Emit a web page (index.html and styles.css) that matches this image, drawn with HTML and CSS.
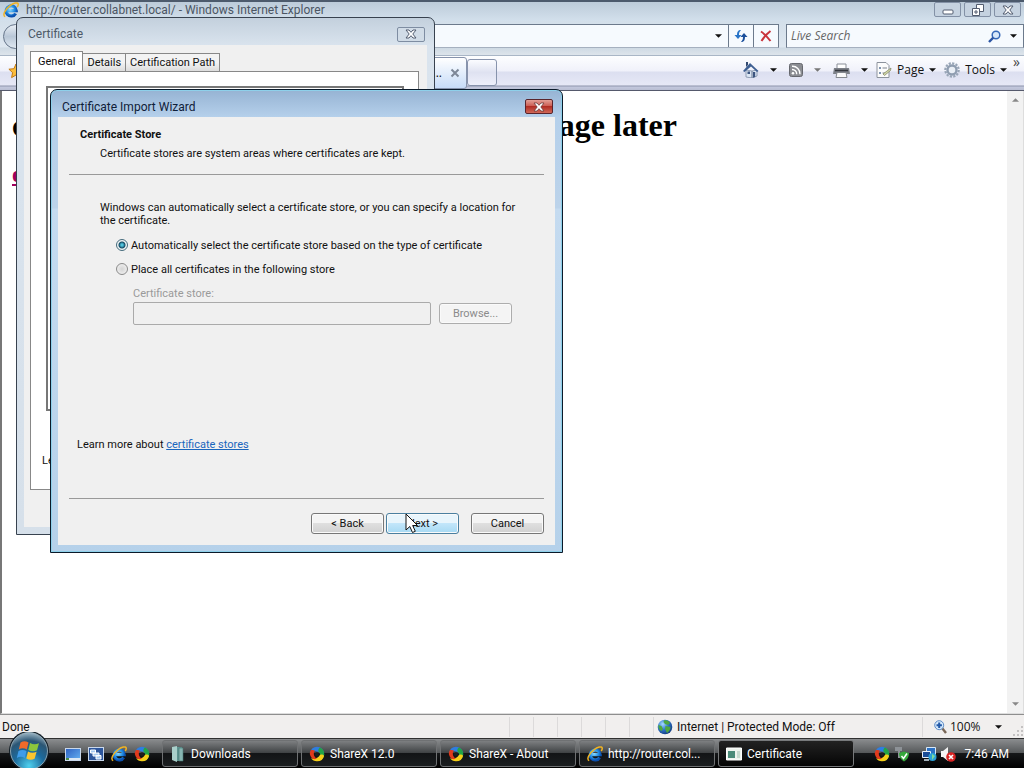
FILE: index.html
```html
<!DOCTYPE html>
<html lang="en">
<head>
<meta charset="utf-8">
<title>Certificate Import Wizard</title>
<link rel="stylesheet" href="styles.css">
</head>
<body>
<svg class="defs" aria-hidden="true">
  <defs>
    <radialGradient id="ieBlue" cx="40%" cy="35%" r="70%"><stop offset="0" stop-color="#8fdcff"/><stop offset=".6" stop-color="#2490e6"/><stop offset="1" stop-color="#0a4fae"/></radialGradient>
    <radialGradient id="orb" cx="50%" cy="90%" r="90%"><stop offset="0" stop-color="#4fd0ee"/><stop offset=".45" stop-color="#1c6a9c"/><stop offset=".75" stop-color="#2c5674"/><stop offset="1" stop-color="#9fb8c6"/></radialGradient>
    <linearGradient id="screen" x1="0" y1="0" x2="1" y2="1"><stop offset="0" stop-color="#2c5fc0"/><stop offset="1" stop-color="#67b4f4"/></linearGradient>
    <radialGradient id="globe" cx="35%" cy="30%" r="75%"><stop offset="0" stop-color="#a8dcff"/><stop offset=".5" stop-color="#3178cc"/><stop offset="1" stop-color="#123a80"/></radialGradient>
  </defs>
  <symbol id="ie" viewBox="0 0 16 16">
    <path d="M3.6 8.6h9.6A5 5 0 1 0 12.6 11.4" fill="none" stroke="url(#ieBlue)" stroke-width="3.200"/>
    <path d="M2.2 14.6C-.8 13.6 1.8 7.4 6.8 3.8 10.4 1.2 14.8-.2 15.2 2c.2 1-.4 2.2-1 3" fill="none" stroke="#f0b323" stroke-width="1.5"/>
  </symbol>
  <symbol id="sharex" viewBox="0 0 16 16">
    <path d="M8 .8A7.2 7.2 0 0 1 15.2 8c0 1.700-.8 3.400-2 4.600C13.400 9 11.600 6 7.600 5.400 5.400 5 3 5 1.200 6.400A7.200 7.200 0 0 1 8 .8z" fill="#2f7de0"/>
    <path d="M15.200 8A7.200 7.200 0 0 1 10.400 14.800C12 12.500 12 8 9.500 5.600 9 3.400 9.800 1.800 11 1.400A7.200 7.200 0 0 1 15.200 8z" fill="#22a347"/>
    <path d="M8 15.200A7.200 7.200 0 0 1 2 12.200C5 13 9.800 12 10.900 8.900c1.800-.8 3.300 0 4.200.8A7.200 7.200 0 0 1 8 15.200z" fill="#f6cf18"/>
    <path d="M.8 8c0-1.400.3-2.700 1-3.700 1.100-.5 2.900-.5 4.200.3C3.800 7.200 4.800 11 8 12.800 5 14.200 1.800 12.600.8 8z" fill="#e03a1c"/>
    <circle cx="8" cy="8.300" r="2" fill="#1d1d1d"/>
  </symbol>
  <symbol id="xmark" viewBox="0 0 12 10">
    <path d="M1 1h3l2 2.300L8 1h3L7.800 5 11 9H8L6 6.700 4 9H1l3.200-4z"/>
  </symbol>
  <symbol id="down" viewBox="0 0 8 4"><path d="M0 0h8L4 4z" fill="currentColor"/></symbol>
</svg>

<main class="browser">
  <header class="titlebar">
    <svg class="i16"><use href="#ie"/></svg>
    <h2 class="window-title">http://router.collabnet.local/ - Windows Internet Explorer</h2>
    <div class="window-buttons">
      <button class="wbtn" aria-label="Minimize"><svg width="12" height="10" viewBox="0 0 12 10"><rect x="1" y="5" width="10" height="4" rx="1" fill="#fff" stroke="#525d70"/></svg></button>
      <button class="wbtn" aria-label="Restore"><svg width="12" height="12" viewBox="0 0 12 12" fill="#fff" stroke="#525d70"><path d="M4.500.5h7v7h-7z"/><path d="M.5 4.500h7v7h-7z"/><path d="M3 7h2v2H3z"/></svg></button>
      <button class="wbtn" aria-label="Close"><svg class="x-pale" width="12" height="10"><use href="#xmark"/></svg></button>
    </div>
  </header>

  <div class="address-row">
    <span class="nav-back"></span>
    <div class="address">
      <input class="address-input" type="text" aria-label="Address">
      <button class="flat" aria-label="Show addresses"><svg class="caret"><use href="#down"/></svg></button>
      <button class="cell" aria-label="Refresh"><svg width="14" height="14" viewBox="0 0 14 14"><path d="M7 1C4 1 3 3 3 6H.5L4 10 7.500 6H5C5 4 5.500 2.500 7 1z" fill="#2a75c8"/><path d="M7 13c3 0 4-2 4-5h2.500L10 4 6.500 8H9c0 2-.5 3.500-2 5z" fill="#1b4f9b"/></svg></button>
      <button class="cell" aria-label="Stop"><svg width="12" height="12" viewBox="0 0 12 12"><path d="M1 1.500Q6 5 10.500 11M10.500 1Q5 5 1.500 11" stroke="#c9343c" stroke-width="2" fill="none"/></svg></button>
    </div>
    <div class="search">
      <input class="search-input" type="text" placeholder="Live Search" aria-label="Live Search">
      <button class="flat" aria-label="Search"><svg width="13" height="13" viewBox="0 0 13 13"><circle cx="8" cy="5" r="3.800" fill="#d8e8fa" stroke="#3668b8" stroke-width="1.500"/><path d="M5.300 7.700 1 12" stroke="#2c55a4" stroke-width="2.400"/></svg></button>
      <button class="flat" aria-label="Search options"><svg class="caret"><use href="#down"/></svg></button>
    </div>
  </div>

  <div class="tab-row">
    <svg class="star" width="16" height="16" viewBox="0 0 16 16"><path d="M8 1l2.100 4.700 5 .5-3.700 3.400 1 5L8 12l-4.400 2.600 1-5L.9 6.200l5-.5z" fill="#fbbd3c" stroke="#c47a10"/></svg>
    <div class="page-tab"><span>...</span><svg width="10" height="10" viewBox="0 0 10 10"><path d="M1.500 1.500l7 7m0-7l-7 7" stroke="#7d8797" stroke-width="2"/></svg></div>
    <button class="new-tab" aria-label="New tab"></button>
    <nav class="commands">
      <button class="cmd wide" aria-label="Home"><svg width="16" height="16" viewBox="0 0 16 16"><path d="M3 8v7l6 1V9zM9 9v7l5-2V8z" fill="#dce6f4" stroke="#7b8aa3" stroke-width=".8"/><path d="M0 9l7-8 8.500 8-1.500 1-6-5.500L1.500 10z" fill="#3e5f92"/><path d="M3 0h2v3l-2 2z" fill="#334a70"/><path d="M10 10h2.200v5L10 15.800zM4.500 9.500h2.500v2.500H4.500z" fill="#3d5580"/></svg><svg class="caret"><use href="#down"/></svg></button>
      <button class="cmd wide dim" aria-label="Feeds"><svg width="14" height="14" viewBox="0 0 14 14"><rect x=".5" y=".5" width="13" height="13" rx="2" fill="#8b8d92" stroke="#66686e"/><circle cx="4" cy="10.200" r="1.300" fill="#fff"/><path d="M3 6.500a4.500 4.500 0 0 1 4.700 4.700M3 3.300a7.500 7.500 0 0 1 8 8" fill="none" stroke="#fff" stroke-width="1.400"/></svg><svg class="caret"><use href="#down"/></svg></button>
      <button class="cmd wide" aria-label="Print"><svg width="17" height="15" viewBox="0 0 17 15"><path d="M4 1h9v5H4z" fill="#fff" stroke="#8a8f98"/><path d="M1 5h15l1 6H0z" fill="#7c8088"/><path d="M2 7.500h13" stroke="#34373d" stroke-width="1.500"/><path d="M4 9.500h9l1 5H3z" fill="#fafafa" stroke="#85898f"/></svg><svg class="caret"><use href="#down"/></svg></button>
      <button class="cmd"><svg width="16" height="16" viewBox="0 0 16 16"><path d="M1 .5h9L13 3.500v12H1z" fill="#fcfcfc" stroke="#8c929c"/><path d="M3 5h2v2H3zm0 5h2v2H3zm3 0h4" fill="#7f93b0"/><path d="M6.500 6H11M6.500 11H10" stroke="#7e848e"/><path d="M7 12l8-6-.5 2.500-6 5z" fill="#d2d8a6" stroke="#7d8060" stroke-width=".7"/></svg><span>Page</span><svg class="caret"><use href="#down"/></svg></button>
      <button class="cmd"><svg width="16" height="16" viewBox="0 0 16 16"><circle cx="8" cy="8" r="6.700" fill="none" stroke="#98a5b6" stroke-width="2.200" stroke-dasharray="2.200 1.300"/><circle cx="8" cy="8" r="4.500" fill="#e9eef5" stroke="#8f9db0" stroke-width="2.400"/></svg><span>Tools</span><svg class="caret"><use href="#down"/></svg></button>
      <button class="more" aria-label="More">»</button>
    </nav>
  </div>

  <div class="viewport">
    <article class="page">
      <h1 class="headline"><span>c</span><span class="headline-end">age later</span></h1>
      <a class="page-link" href="#">e</a>
    </article>
    <div class="scrollbar"><svg class="arrow up"><use href="#down"/></svg><svg class="arrow"><use href="#down"/></svg></div>
  </div>

  <footer class="status">
    <span class="status-text">Done</span>
    <span class="slot"></span><span class="slot"></span><span class="slot"></span><span class="slot"></span><span class="slot"></span><span class="slot"></span>
    <span class="zone"><svg width="16" height="16" viewBox="0 0 16 16"><circle cx="8" cy="8" r="7.300" fill="url(#globe)"/><path d="M7 1.500c2-1 5 .5 6 2.500L11 6 8 5 6.500 3zM8.500 7l5 1c0 3-2 5-3.500 6L8 10zM1.500 6l3 1 1.500 3-1.500 2C2 11 1 8.500 1.500 6z" fill="#4fa63d"/></svg>Internet | Protected Mode: Off</span>
    <button class="zoom"><svg width="13" height="14" viewBox="0 0 13 14"><path d="M8 8l4 5" stroke="#7a6858" stroke-width="2.400"/><circle cx="5.200" cy="5.200" r="4.500" fill="#d5e9fb" stroke="#5e8cc6"/><path d="M5.200 2.500v5.400M2.500 5.200h5.400" stroke="#2359a8" stroke-width="2"/></svg>100%<svg class="caret"><use href="#down"/></svg></button>
    <svg class="grip" width="10" height="10" viewBox="0 0 10 10"><path d="M8 0h2v2H8zM8 4h2v2H8zM8 8h2v2H8zM4 4h2v2H4zM4 8h2v2H4zM0 8h2v2H0z" fill="#c4c2c2"/></svg>
  </footer>
</main>

<footer class="taskbar">
  <button class="start" aria-label="Start"><svg width="42" height="36" viewBox="0 0 42 36"><circle cx="21" cy="19" r="20" fill="#111d26"/><circle cx="21" cy="19" r="18.500" fill="url(#orb)" stroke="#a5bcc8" stroke-width=".8"/><path d="M12.500 10.500q4-2.500 8 0l-1.700 7q-4-2.300-8 0z" fill="#f06a2a"/><path d="M22 11q4 2.300 9 .3l-2 7q-4 2-8.700-.3z" fill="#8cc63c"/><path d="M10.500 19q4-2.200 8 0l-1.700 7q-4-2.500-8 0z" fill="#3f9ce8"/><path d="M20 19.500q4 2.300 8.600.3l-2 7q-4 2-8.300-.3z" fill="#fbc52e"/></svg></button>
  <div class="quick">
    <svg class="i16" viewBox="0 0 16 16"><rect x=".5" y="2.500" width="15" height="12" fill="url(#screen)" stroke="#c9d8ec"/><path d="M1 13h14" stroke="#dbe8f4" stroke-width="2"/><path d="M1 12h3v2H1z" fill="#4a8b46"/></svg>
    <svg class="i16" viewBox="0 0 16 16"><rect x=".5" y="1.500" width="15" height="13" fill="#2d569c" stroke="#c9d8ec"/><path d="M2.500 4h5v3h-5zM5 7h6v3H5zM8 9.500h5V13H8z" fill="#a9ccf2" stroke="#fff"/></svg>
    <svg class="i16"><use href="#ie"/></svg>
    <svg class="i16"><use href="#sharex"/></svg>
  </div>
  <div class="tasks">
    <button class="task"><svg class="i16" viewBox="0 0 16 16"><path d="M2 1l5-1v16l-5-2z" fill="#a9cfca"/><path d="M7 1h5v14H7z" fill="#5c938f"/><path d="M9 2h4v13H9z" fill="#86b5b1" stroke="#467773" stroke-width=".6"/></svg>Downloads</button>
    <button class="task"><svg class="i16"><use href="#sharex"/></svg>ShareX 12.0</button>
    <button class="task"><svg class="i16"><use href="#sharex"/></svg>ShareX - About</button>
    <button class="task"><svg class="i16"><use href="#ie"/></svg>http://router.col...</button>
    <button class="task active"><svg class="i16" viewBox="0 0 16 16"><path d="M.5 2h15v12H.5z" fill="#eef4ee" stroke="#fff"/><path d="M2 5h7v7H2z" fill="#4a8b78"/><path d="M11 5h3v7h-3z" fill="#c6dace"/></svg>Certificate</button>
  </div>
  <div class="tray">
    <svg class="i16"><use href="#sharex"/></svg>
    <svg class="i16" viewBox="0 0 16 16"><path d="M2 1h7v4H2zM5 5h2v7H5z" fill="#8d9297"/><path d="M6 7l5-1.500L16 7c0 4-2 7-5 8.500C8 14 6 11 6 7z" fill="#35a83b"/><path d="M8.500 10l2 2.500L14 7.500" fill="none" stroke="#fff" stroke-width="1.500"/></svg>
    <svg class="i16 net" viewBox="0 0 16 16"><path d="M5.500 1.500h9v7h-9z" fill="#2b70c4" stroke="#d9e8f6"/><path d="M1.500 5.500h8v6h-8z" fill="#1a4d98" stroke="#e8f2fb"/><path d="M3 14h5" stroke="#d9e8f6" stroke-width="1.500"/><circle cx="11.500" cy="11" r="4" fill="#2ba0d8"/><path d="M11 8l3 2-3 4z" fill="#7fdc9a"/></svg>
    <svg class="i16" viewBox="0 0 16 16"><path d="M1 5h2l5-4v14l-5-4H1z" fill="#f5f5f5"/><circle cx="11" cy="11" r="4.800" fill="#d92424"/><path d="M9 9l4 4m0-4l-4 4" stroke="#fff" stroke-width="1.600"/></svg>
    <time class="clock">7:46 AM</time>
  </div>
</footer>

<section class="dialog cert" aria-label="Certificate">
  <header class="dialog-bar"><h2 class="dialog-title">Certificate</h2><button class="close-pale" aria-label="Close"><svg class="x-pale" width="12" height="10"><use href="#xmark"/></svg></button></header>
  <div class="dialog-body cert-body">
    <div class="cert-tabs"><button class="cert-tab on">General</button><button class="cert-tab">Details</button><button class="cert-tab">Certification Path</button></div>
    <div class="cert-panel"><div class="cert-box"></div><p class="cert-note">Learn more</p></div>
  </div>
</section>

<section class="dialog wizard" aria-label="Certificate Import Wizard">
  <header class="dialog-bar"><h2 class="dialog-title">Certificate Import Wizard</h2><button class="close-red" aria-label="Close"><svg width="12" height="10" fill="#fff" stroke="#6b3a3a" stroke-width=".8"><use href="#xmark"/></svg></button></header>
  <form class="dialog-body wizard-body">
    <div class="wizard-head"><h3 class="step">Certificate Store</h3><p class="step-sub">Certificate stores are system areas where certificates are kept.</p></div>
    <div class="wizard-main">
      <p class="intro">Windows can automatically select a certificate store, or you can specify a location for the certificate.</p>
      <label class="choice"><input class="radio" type="radio" name="store" checked>Automatically select the certificate store based on the type of certificate</label>
      <label class="choice"><input class="radio" type="radio" name="store">Place all certificates in the following store</label>
      <div class="store">
        <label class="store-label" for="store-name">Certificate store:</label>
        <div class="store-row"><input class="store-input" id="store-name" type="text" disabled><button class="btn" type="button" disabled>Browse...</button></div>
      </div>
      <p class="learn">Learn more about <a class="learn-link" href="#">certificate stores</a></p>
    </div>
    <div class="wizard-foot"><button class="btn" type="button">&lt; Back</button><button class="btn hot" type="button">Next &gt;</button><button class="btn cancel" type="button">Cancel</button></div>
  </form>
</section>

<svg class="cursor" width="14" height="21" viewBox="0 0 14 21"><path d="M1 1v16l3.800-3.500L7.500 19.500l2.800-1.200-2.600-5.800H12.500z" fill="#fff" stroke="#111" stroke-width="1"/></svg>
</body>
</html>
```
FILE: styles.css
```css
* { box-sizing: border-box; }
:root {
  --ui: Roboto, "Open Sans", sans-serif;
  --humanist: "Open Sans", "Noto Sans", sans-serif;
}
body {
  margin: 0;
  height: 100vh;
  display: flex;
  flex-direction: column;
  overflow: hidden;
  background: #fff;
  font: 12px/16px var(--humanist);
  color: #111;
}
h1, h2, h3, p { margin: 0; font-weight: 400; }
button, input { font: inherit; color: inherit; margin: 0; padding: 0; border: 0; background: none; }
svg { flex: none; }
.defs { position: absolute; width: 0; height: 0; }
.i16 { width: 16px; height: 16px; }
.caret { width: 7px; height: 4px; }

/* Browser window */
.browser { flex: 1; min-height: 0; display: flex; flex-direction: column; }
.titlebar {
  height: 21px;
  display: flex;
  align-items: flex-start;
  gap: 7px;
  padding-left: 3px;
  border-top: 2px solid #4c5a6c;
  background: linear-gradient(#bccbd9, #d3e0ec);
}
.window-title { flex: 1; font: 12px/16px var(--ui); color: #4b5563; }
.window-buttons { display: flex; gap: 3px; padding-right: 3px; }
.wbtn {
  display: grid;
  place-items: center;
  width: 27px;
  height: 15px;
  border: 1px solid #8391a6;
  border-radius: 2px;
  background: #c5d2e0;
}
.x-pale { fill: #fff; stroke: #525d70; }
.address-row {
  height: 34px;
  display: flex;
  align-items: flex-start;
  gap: 7px;
  padding: 3px 0 0 3px;
  background: linear-gradient(#d3dfea, #dee7f0 75%, #cfdae4 80%, #dde4eb);
}
.nav-back { width: 25px; height: 25px; border: 1px solid #66758a; border-radius: 50%; background: linear-gradient(#e8eef5, #b9c7d7 50%, #dfe8f1); }
.address { flex: 1; display: flex; height: 24px; border: 1px solid #6c7a8c; border-bottom-color: #a5b0bf; background: #f6fafe; }
.address-input { flex: 1; min-width: 0; }
.flat { display: grid; place-items: center; width: 19px; }
.cell { display: grid; place-items: center; width: 25px; border-left: 1px solid #6c7a8c; }
.search { width: 238px; display: flex; height: 24px; border: 1px solid #6c7a8c; border-bottom-color: #a5b0bf; background: #f6fafe; }
.search-input { flex: 1; min-width: 0; padding-left: 4px; font-style: italic; }
.search-input::placeholder { color: #666; opacity: 1; }
.tab-row {
  height: 36px;
  display: flex;
  align-items: flex-start;
  border-top: 1px solid #a9b6c6;
  border-bottom: 1px solid #55596c;
  background: linear-gradient(#fdfeff, #f0f1fa 15px, #dcdff0 16px, #e6e8f6 29px, #8d94ab 30px, #c3c8dd 31px, #b9bed2);
}
.star { margin: 7px 0 0 8px; }
.page-tab {
  display: flex;
  align-items: center;
  justify-content: flex-end;
  gap: 8px;
  width: 443px;
  height: 32px;
  margin-top: 1px;
  padding-right: 6px;
  border: 1px solid #8793ac;
  border-radius: 3px;
  background: linear-gradient(#fff, #c7dcf8);
}
.new-tab { width: 30px; height: 27px; margin-top: 3px; border: 1px solid #8793ac; border-radius: 3px; background: linear-gradient(#fbfcff, #dfe2f1 50%, #eef0fb); }
.commands { flex: 1; display: flex; justify-content: flex-end; gap: 8px; padding-right: 4px; }
.cmd { display: flex; align-items: center; gap: 5px; height: 28px; }
.wide { gap: 11px; margin-right: 4px; }
.wide + .cmd:not(.wide) { margin-left: -4px; }
.dim .caret { color: #777; }
.more { align-self: flex-start; margin-left: -2px; font-size: 14px; line-height: 12px; color: #444; }
.viewport { flex: 1; min-height: 0; display: flex; border-left: 2px solid #777; border-bottom: 1px solid #ddd; }
.page { flex: 1; padding: 15px 10px; font-family: "Liberation Serif", serif; color: #000; }
.headline { display: flex; justify-content: space-between; max-width: 665px; font-size: 32px; line-height: 38px; font-weight: 700; }
.page-link { display: inline-block; margin-top: 16px; font-size: 24px; line-height: 28px; font-weight: 700; color: #a0005c; }
.scrollbar { width: 17px; display: flex; flex-direction: column; justify-content: space-between; align-items: center; padding: 7px 0; background: #f2f2f2; border-right: 1px solid #ddd; }
.arrow { width: 7px; height: 4px; color: #888; }
.up { transform: rotate(180deg); }
.status { height: 24px; display: flex; align-items: center; padding-top: 1px; border-top: 1px solid #8e8e8e; background: #f1efee; }
.status-text { flex: 1; padding-left: 2px; font: 12px/16px var(--ui); }
.slot { width: 24px; height: 20px; border-left: 1px solid #dcdada; }
.zone { display: flex; align-items: center; gap: 4px; width: 269px; padding-left: 3px; height: 20px; border-left: 1px solid #dcdada; font: 12px/16px var(--ui); }
.zoom { display: flex; align-items: center; gap: 3px; width: 80px; padding-left: 11px; height: 20px; border-left: 1px solid #dcdada; }
.zoom .caret { margin-left: 11px; }
.grip { align-self: flex-end; margin: 0 1px 2px 11px; }

/* Taskbar */
.taskbar {
  height: 30px;
  display: flex;
  align-items: center;
  border-top: 1px solid #303030;
  background: linear-gradient(#8b8d8f, #55585a 48%, #151719 50%, #000);
  color: #fff;
}
.start { width: 54px; height: 36px; padding-left: 8px; align-self: flex-end; }
.start svg { display: block; }
.quick { display: flex; gap: 7px; padding: 0 12px 0 11px; }
.tasks { flex: 1; display: flex; gap: 3px; }
.task {
  flex: 0 1 136px;
  display: flex;
  align-items: center;
  gap: 5px;
  height: 27px;
  padding-left: 7px;
  border: 1px solid #6f7173;
  border-radius: 3px;
  background: linear-gradient(#7d7f81, #3e4143 48%, #121416 50%, #1b1e20);
  text-align: left;
  white-space: nowrap;
}
.task.active { background: linear-gradient(#222, #050505); border-color: #77797b; }
.task, .clock { font: 12px/16px var(--ui); }
.tray { display: flex; align-items: center; gap: 3px; padding-right: 15px; }
.net { margin-left: 9px; }
.clock { margin-left: 6px; }

/* Dialog windows */
.dialog { position: absolute; display: flex; flex-direction: column; border: 1px solid #38424f; border-radius: 7px 7px 0 0; padding: 0 7px 7px; font: 11px/13px var(--ui); }
.dialog-bar { height: 27px; display: flex; align-items: center; justify-content: space-between; }
.dialog-title { padding: 5px 0 0 4px; font-size: 12px; line-height: 16px; }
.dialog-body { flex: 1; min-height: 0; display: flex; flex-direction: column; background: #f0f0f0; }
.cert { left: 16px; top: 17px; width: 419px; height: 518px; background: linear-gradient(#c3d0dd, #dae4ee 28px, #d6e0ea); }
.cert .dialog-title { color: #4e5a68; }
.close-pale, .close-red { display: grid; place-items: center; width: 28px; height: 15px; border: 1px solid #7e8da2; border-radius: 2px; background: #d1dce7; }
.close-pale { margin: 5px 2px 0 0; }
.cert-body { padding: 6px 8px 37px 6px; }
.cert-tabs { display: flex; align-items: flex-end; height: 20px; }
.cert-tab { height: 18px; padding: 0 4px; border: 1px solid #888; border-left: 0; border-bottom: 0; background: linear-gradient(#f3f3f3 50%, #dcdcdc); line-height: 17px; }
.cert-tab.on { height: 20px; padding: 0 7px; border-left: 1px solid #888; background: #fff; }
.cert-panel { flex: 1; display: flex; flex-direction: column; border: 1px solid #888; background: #fff; padding: 14px 14px 0 11px; }
.cert-box { height: 325px; margin-left: 4px; border: 2px solid #777; }
.cert-note { margin-top: 43px; }
.wizard { left: 50px; top: 89px; width: 513px; height: 464px; border-color: #0b1a2a; background: linear-gradient(#96b3d3, #b5d0eb 27px, #bcd3ea 118px, #c5dbf0 119px, #b5d1ea); box-shadow: inset 0 0 0 1px #8ed0ea; }
.wizard .dialog-title { color: #0f2038; padding-top: 6px; }
.close-red { margin: 6px 2px 0 0; border-color: #59242c; background: linear-gradient(#e3a097, #cb5a50 48%, #b12d24 50%, #d06858); }
.wizard-body { padding: 11px 11px 11px; }
.wizard-head { height: 47px; padding-left: 11px; border-bottom: 1px solid #999; }
.step { font-size: 11px; font-weight: 700; line-height: 14px; }
.step-sub { margin-top: 5px; padding-left: 20px; line-height: 14px; }
.wizard-main { flex: 1; display: flex; flex-direction: column; padding: 26px 32px 0 31px; }
.intro { margin-right: -16px; }
.choice { display: flex; align-items: center; gap: 3px; height: 24px; margin-left: 16px; }
.intro + .choice { margin-top: 6px; }
.radio { appearance: none; width: 12px; height: 12px; border: 1px solid #8a8a8a; border-radius: 50%; background: radial-gradient(#d4d4d4, #f6f6f6); }
.radio:checked { border-color: #446b7c; background: radial-gradient(circle, #4fc3dd 0 1px, #124a64 3px, #eef3f5 4px); }
.store { margin: 6px 0 0 33px; color: #9a9a9a; }
.store-label { display: block; line-height: 13px; }
.store-row { display: flex; align-items: center; gap: 8px; margin-top: 2px; }
.store-input { flex: 1; min-width: 0; height: 23px; border: 1px solid #aaa; border-radius: 2px; }
.btn { width: 73px; height: 21px; border: 1px solid #777; border-radius: 3px; background: linear-gradient(#f4f4f4 48%, #dfdfdf 50%, #d1d1d1); box-shadow: inset 0 0 0 1px #fafafa; }
.btn:disabled { border-color: #adadad; background: #f4f4f4; color: #8b8b8b; }
.btn.hot { border-color: #4a7f9f; background: linear-gradient(#e8f5fc 48%, #c2e6fa 50%, #a6d9f3); }
.learn { margin: auto 0 47px -23px; }
.learn-link { color: #1a66bd; }
.wizard-foot { display: flex; justify-content: flex-end; gap: 2px; padding-top: 14px; border-top: 1px solid #999; }
.cancel { margin-left: 10px; }
.cursor { position: absolute; left: 405px; top: 513px; }
```
